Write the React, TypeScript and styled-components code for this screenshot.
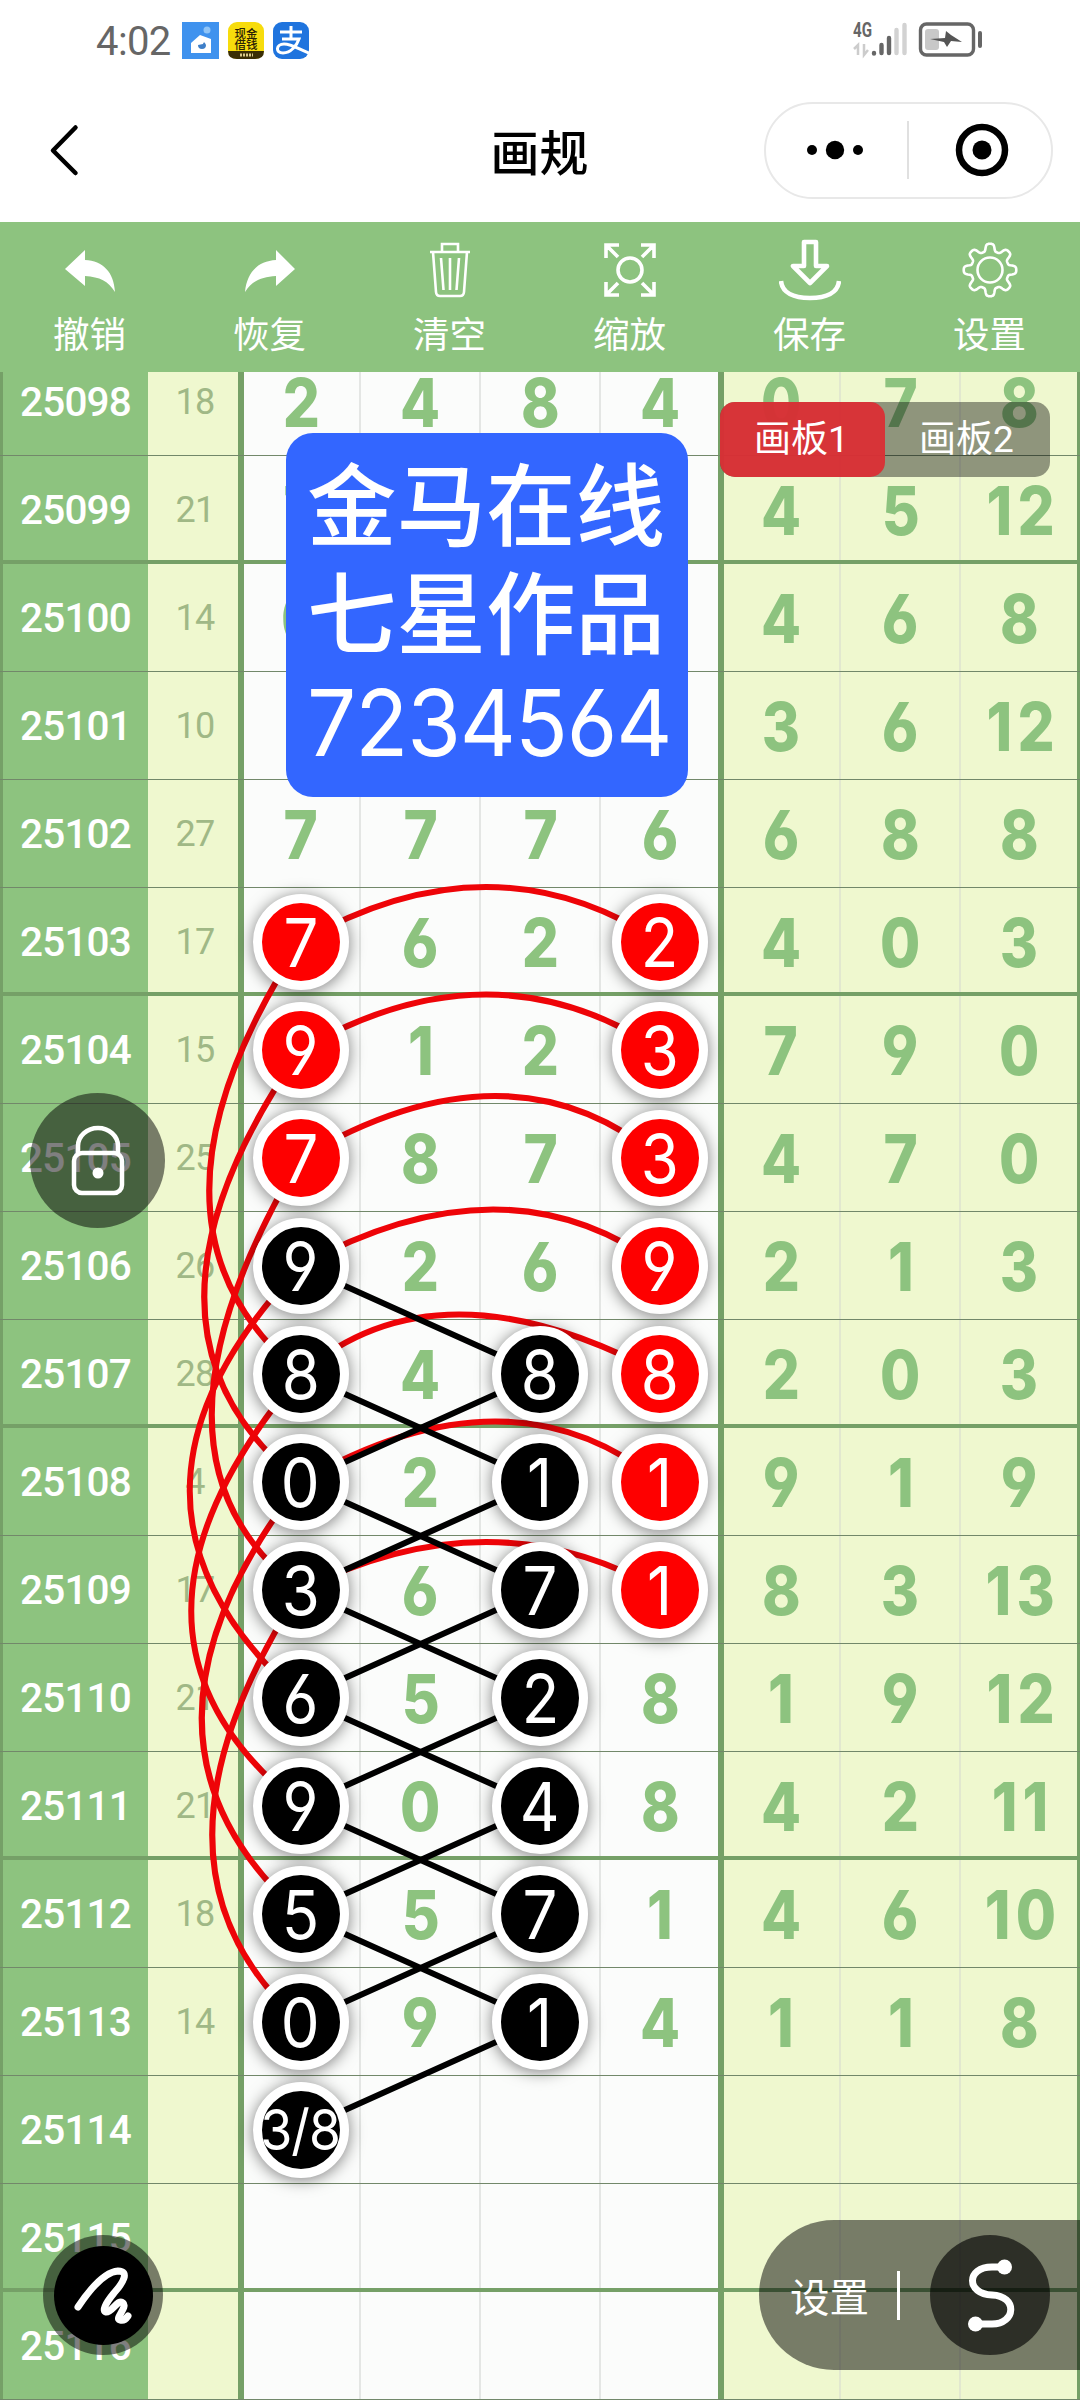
import React from "react";
import styled, { createGlobalStyle, css } from "styled-components";

const GREEN = "#8dc37f";
const LINE = "#75a067";
const PALE = "#eff8cf";
const latin = `Inter, Roboto, "Noto Sans CJK SC", sans-serif`;
const tabular = `Roboto, "Noto Sans CJK SC", sans-serif`;
const hans = `"Noto Sans CJK SC", sans-serif`;

const Global = createGlobalStyle`
  * { box-sizing: border-box; }
  body { margin: 0; background: #fff; font-family: ${latin}; font-feature-settings: "cv03", "cv04"; }
`;

const Screen = styled.div`
  position: relative;
  width: 1080px;
  height: 2400px;
  overflow: hidden;
  display: flex;
  flex-direction: column;
  background: #fff;
`;

/* ---------- status bar ---------- */
const StatusBar = styled.div`
  height: 80px;
  padding: 0 97px 0 96px;
  display: flex;
  align-items: center;
  justify-content: space-between;
`;
const StatusGroup = styled.div<{ $gap: number }>`
  display: flex;
  align-items: center;
  gap: ${(p) => p.$gap}px;
`;
const Clock = styled.span`
  width: 77px;
  font: 400 40px/44px Roboto, sans-serif;
  letter-spacing: -0.6px;
  color: #666;
  padding-top: 3px;
`;

/* ---------- navigation bar ---------- */
const NavBar = styled.div`
  height: 142px;
  padding: 0 27px 2px 48px;
  display: grid;
  grid-template-columns: 289px 1fr 289px;
  align-items: center;
`;
const Title = styled.h1`
  margin: 0 0 0 -22px;
  padding-bottom: 1px;
  font: 500 49px/56px ${hans};
  text-align: center;
  color: #000;
`;
const Capsule = styled.div`
  height: 97px;
  border: 2px solid #e8e8e8;
  border-radius: 49px;
  padding-right: 1px;
  display: grid;
  grid-template-columns: 1fr 2px 1fr;
  align-items: center;
  justify-items: center;
`;
const CapsuleRule = styled.i`
  width: 2px;
  height: 58px;
  background: #e0e0e0;
`;
const CapsuleIcon = styled.svg<{ $shift: number }>`
  margin-left: ${(p) => Math.max(p.$shift, 0)}px;
  margin-right: ${(p) => Math.max(-p.$shift, 0)}px;
`;

/* ---------- toolbar ---------- */
const Toolbar = styled.div`
  position: relative;
  z-index: 5;
  height: 150px;
  flex: none;
  display: grid;
  grid-template-columns: repeat(6, 1fr);
  background: ${GREEN};
`;
const Tool = styled.button`
  border: 0;
  padding: 16px 1px 0 0;
  background: none;
  display: flex;
  flex-direction: column;
  align-items: center;
  gap: 11px;
  color: #fff;
  font: 400 36.5px/40px ${hans};
`;

/* ---------- trend table ---------- */
const Viewport = styled.main`
  position: relative;
  flex: 1;
  overflow: hidden;
`;
const Sheet = styled.div`
  position: relative;
  margin-top: -24px;
`;
const Row = styled.div<{ $heavy: boolean }>`
  height: 108px;
  display: grid;
  grid-template-columns: 148px 90px 123px 120px 120px 117px 123px 120px 119px;
  border-bottom: ${(p) => (p.$heavy ? `4px solid ${LINE}` : "1px solid #72886a")};
`;
const Centered = css<{ $heavy: boolean }>`
  display: flex;
  align-items: center;
  justify-content: center;
  line-height: 1;
  padding-top: ${(p) => (p.$heavy ? 4 : 1)}px;
`;
const Issue = styled.div<{ $heavy: boolean }>`
  ${Centered}
  border-left: 3px solid ${LINE};
  background: ${GREEN};
  color: #fff;
  font-family: ${tabular};
  font-size: 40.5px;
  font-weight: 500;
  letter-spacing: -0.8px;
`;
const Sum = styled.div<{ $heavy: boolean }>`
  ${Centered}
  background: ${PALE};
  color: #a0b886;
  font-family: ${tabular};
  font-size: 36px;
  font-weight: 400;
  letter-spacing: -0.8px;
  padding-left: 4px;
`;
const Cell = styled.div<{ $heavy: boolean; $pale: boolean; $first: boolean; $last: boolean }>`
  ${Centered}
  background: ${(p) => (p.$pale ? PALE : "#fbfcfb")};
  border-left: ${(p) => (p.$first ? `6px solid ${LINE}` : "0")};
  border-right: ${(p) =>
    p.$last ? (p.$pale ? `3px solid ${LINE}` : "0") : `2px solid ${p.$pale ? "#e2e8cf" : "#e4e6e4"}`};
  ${(p) => p.$first && "padding-right: 2px;"}
`;
const Digit = styled.span<{ $wide: boolean }>`
  color: ${GREEN};
  font-size: 67px;
  font-weight: 800;
  letter-spacing: ${(p) => (p.$wide ? 6 : 0)}px;
  margin-left: ${(p) => (p.$wide ? 8 : 1)}px;
  transform: scaleX(0.87);
`;
const Ball = styled.span<{ $tone: string; $small: boolean }>`
  position: relative;
  z-index: 2;
  flex: none;
  width: 96px;
  height: 96px;
  border: 9px solid #fff;
  border-radius: 50%;
  background: ${(p) => p.$tone};
  box-shadow: 0 2px 16px rgba(0, 0, 0, 0.5);
  color: #fff;
  font-size: ${(p) => (p.$small ? 56 : 67)}px;
  font-weight: 400;
  letter-spacing: ${(p) => (p.$small ? -1 : 0)}px;
  display: flex;
  align-items: center;
  justify-content: center;
`;
const BallText = styled.span`
  transform: scaleX(0.92);
`;
const Strokes = styled.svg`
  position: absolute;
  z-index: 1;
  left: 0;
  top: 0;
  pointer-events: none;
`;

/* ---------- floating pieces ---------- */
const Note = styled.div`
  position: absolute;
  z-index: 3;
  left: 286px;
  top: 433px;
  width: 402px;
  height: 364px;
  padding: 20px 21px;
  border-radius: 27px;
  background: #3366ff;
  color: #fff;
  font-size: 89.5px;
  font-weight: 500;
  line-height: 108px;
  white-space: nowrap;
`;
const NoteNumber = styled.div`
  font-size: 92px;
  font-weight: 400;
  letter-spacing: -1.1px;
  transform: scaleX(0.945);
  transform-origin: left;
`;
const Boards = styled.div`
  position: absolute;
  z-index: 4;
  left: 720px;
  top: 402px;
  width: 330px;
  height: 75px;
  display: flex;
  border-radius: 15px;
  background: rgba(0, 0, 0, 0.4);
`;
const Board = styled.button<{ $on: boolean }>`
  flex: 1;
  border: 0;
  padding: 0 2px 0 0;
  border-radius: 15px;
  background: ${(p) => (p.$on ? "rgba(217, 49, 54, 0.97)" : "transparent")};
  color: #fff;
  font: 400 37px/75px ${tabular};
`;
const Round = styled.button<{ $x: number; $y: number; $size: number }>`
  position: absolute;
  z-index: 4;
  left: ${(p) => p.$x}px;
  top: ${(p) => p.$y}px;
  width: ${(p) => p.$size}px;
  height: ${(p) => p.$size}px;
  border: 0;
  padding: 0;
  border-radius: 50%;
  background: rgba(0, 0, 0, 0.5);
  display: flex;
  align-items: center;
  justify-content: center;
`;
const PenCore = styled.span`
  width: 99px;
  height: 99px;
  border-radius: 50%;
  background: #000;
`;
const Dock = styled.div`
  position: absolute;
  z-index: 4;
  right: 0;
  top: 2220px;
  width: 321px;
  height: 150px;
  padding: 0 30px 0 31px;
  border-radius: 75px 0 0 75px;
  background: rgba(0, 0, 0, 0.5);
  display: flex;
  align-items: center;
  color: #fff;
  font: 400 39.5px/48px ${hans};
`;
const DockRule = styled.i`
  width: 3px;
  height: 49px;
  margin: 0 auto 0 28px;
  background: #fff;
`;
const DockCore = styled.span`
  width: 120px;
  height: 120px;
  flex: none;
  border-radius: 50%;
  background: rgba(0, 0, 0, 0.62);
`;

/* ---------- data ---------- */
type Mark = "r" | "k";
type Line = { issue: string; sum: string; d: string[]; m?: Record<number, Mark>; e: string[] };
const LINES: Line[] = [
  { issue: "25098", sum: "18", d: ["2", "4", "8", "4"], e: ["0", "7", "8"] },
  { issue: "25099", sum: "21", d: ["7", "", "", ""], e: ["4", "5", "12"] },
  { issue: "25100", sum: "14", d: ["0", "", "", ""], e: ["4", "6", "8"] },
  { issue: "25101", sum: "10", d: ["", "", "", ""], e: ["3", "6", "12"] },
  { issue: "25102", sum: "27", d: ["7", "7", "7", "6"], e: ["6", "8", "8"] },
  { issue: "25103", sum: "17", d: ["7", "6", "2", "2"], m: { 0: "r", 3: "r" }, e: ["4", "0", "3"] },
  { issue: "25104", sum: "15", d: ["9", "1", "2", "3"], m: { 0: "r", 3: "r" }, e: ["7", "9", "0"] },
  { issue: "25105", sum: "25", d: ["7", "8", "7", "3"], m: { 0: "r", 3: "r" }, e: ["4", "7", "0"] },
  { issue: "25106", sum: "26", d: ["9", "2", "6", "9"], m: { 0: "k", 3: "r" }, e: ["2", "1", "3"] },
  { issue: "25107", sum: "28", d: ["8", "4", "8", "8"], m: { 0: "k", 2: "k", 3: "r" }, e: ["2", "0", "3"] },
  { issue: "25108", sum: "4", d: ["0", "2", "1", "1"], m: { 0: "k", 2: "k", 3: "r" }, e: ["9", "1", "9"] },
  { issue: "25109", sum: "17", d: ["3", "6", "7", "1"], m: { 0: "k", 2: "k", 3: "r" }, e: ["8", "3", "13"] },
  { issue: "25110", sum: "21", d: ["6", "5", "2", "8"], m: { 0: "k", 2: "k" }, e: ["1", "9", "12"] },
  { issue: "25111", sum: "21", d: ["9", "0", "4", "8"], m: { 0: "k", 2: "k" }, e: ["4", "2", "11"] },
  { issue: "25112", sum: "18", d: ["5", "5", "7", "1"], m: { 0: "k", 2: "k" }, e: ["4", "6", "10"] },
  { issue: "25113", sum: "14", d: ["0", "9", "1", "4"], m: { 0: "k", 2: "k" }, e: ["1", "1", "8"] },
  { issue: "25114", sum: "", d: ["3/8", "", "", ""], m: { 0: "k" }, e: ["", "", ""] },
  { issue: "25115", sum: "", d: ["", "", "", ""], e: ["", "", ""] },
  { issue: "25116", sum: "", d: ["", "", "", ""], e: ["", "", ""] },
];

const rowY = (n: number) => 54 + 108 * n;
// row index, control point x, control point rise
const BOWS: [number, number, number][] = [
  [5, 492, 110], [6, 492, 111], [7, 510, 124], [8, 506, 113], [9, 438, 119], [10, 510, 121], [11, 492, 96],
];
// row index, control point x, control point drop
const SWEEPS: [number, number, number][] = [
  [5, 118, 281], [6, 108, 278], [7, 123, 298], [8, 79, 234], [9, 82, 258], [10, 103, 256], [11, 124, 274],
];
const ZIG = [8, 9, 10, 11, 12, 13, 14];

const Drawing = () => (
  <Strokes width="1080" height="2052" viewBox="0 0 1080 2052" fill="none" strokeWidth="6">
    <g stroke="#ee0408">
      {BOWS.map(([n, cx, h]) => (
        <path key={n} d={`M300.5 ${rowY(n)}Q${cx} ${rowY(n) - h} 660 ${rowY(n)}`} />
      ))}
      {SWEEPS.map(([n, cx, h]) => (
        <path key={n} d={`M300.5 ${rowY(n)}Q${cx} ${rowY(n) + h} 300.5 ${rowY(n + 4)}`} />
      ))}
    </g>
    <g stroke="#000">
      {ZIG.map((n) => (
        <path key={n} d={`M300.5 ${rowY(n)}L540.5 ${rowY(n + 1)}L300.5 ${rowY(n + 2)}`} />
      ))}
    </g>
  </Strokes>
);

const gearPath = () => {
  const pts: string[] = [];
  for (let i = 0; i < 192; i++) {
    const a = (i / 192) * Math.PI * 2;
    const r = 22.6 + 3.8 * Math.tanh(2 * Math.cos(8 * a));
    pts.push(`${(30 + r * Math.cos(a)).toFixed(2)} ${(32 + r * Math.sin(a)).toFixed(2)}`);
  }
  return `M${pts.join("L")}Z`;
};

const TOOLS: { name: string; icon: React.ReactNode }[] = [
  {
    name: "撤销",
    icon: <path fill="#fff" d="M5 31 25 12V22C43 23 54 34 55 54C48 43 40 39 25 38V48Z" />,
  },
  {
    name: "恢复",
    icon: <path fill="#fff" d="M55 31 36 12V22C18 23 7 34 5 54C12 43 21 39 36 38V48Z" />,
  },
  {
    name: "清空",
    icon: (
      <g strokeWidth="2.6">
        <path d="M10 14H50M22 14V6H38V14M13 14L16 54Q16.300 58 20 58H40Q43.700 58 44 54L47 14M21 20L23.500 52M30 20V52M39 20L36.500 52" />
      </g>
    ),
  },
  {
    name: "缩放",
    icon: (
      <g strokeWidth="3.600">
        <circle cx="30" cy="32" r="12" />
        <path d="M6 20V7H19M7 8 18 19M41 7H54V20M53 8 42 19M6 44V57H19M7 56 18 45M41 57H54V44M53 56 42 45" />
      </g>
    ),
  },
  {
    name: "保存",
    icon: (
      <g strokeWidth="4.600" strokeLinejoin="round">
        <path d="M24 4H36V28H47L30 45 13 28H24Z" />
        <path d="M1 43C2 55 14 60 30 60S58 55 59 43" />
      </g>
    ),
  },
  {
    name: "设置",
    icon: (
      <g strokeWidth="2.6" strokeLinejoin="round">
        <circle cx="30" cy="32" r="12.500" />
        <path d={gearPath()} />
      </g>
    ),
  },
];

export default function App() {
  return (
    <Screen>
      <Global />
      <StatusBar>
        <StatusGroup $gap={9}>
          <Clock>4:02</Clock>
          <svg width="37" height="37" viewBox="0 0 37 37">
            <rect width="37" height="37" fill="#3f92ee" />
            <path d="M9 31V21L18 13 29 17V31Z" fill="#fff" />
            <path d="M16 23A4 4 0 0 0 24 23Q22 18 21 22Z" fill="#3f7fc8" />
            <circle cx="25" cy="8" r="3.500" fill="#8fc4f7" />
          </svg>
          <svg width="36" height="37" viewBox="0 0 36 37">
            <rect width="36" height="37" rx="9" fill="#f7dc0c" />
            <path d="M0 29H36Q36 37 27 37H9Q0 37 0 29Z" fill="#3a2e05" />
            <text x="18" y="15.500" fontSize="11.500" fontWeight="500" textAnchor="middle" fill="#2a2205">现金</text>
            <text x="18" y="27" fontSize="11.500" fontWeight="500" textAnchor="middle" fill="#2a2205">借钱</text>
            <path d="M12 33H25" stroke="#d9c98a" strokeWidth="3" strokeDasharray="2 1" />
          </svg>
          <svg width="36" height="37" viewBox="0 0 36 37" fill="none" stroke="#fff" strokeWidth="3">
            <rect width="36" height="37" rx="9" fill="#1f74de" stroke="none" />
            <path d="M7 10H29M18 4V17M9 17H26C24 23 18 31 10 31C2 31 3 22 11 22C18 22 26 27 36 31" />
          </svg>
        </StatusGroup>
        <StatusGroup $gap={0}>
          <svg width="130" height="44" viewBox="0 0 130 44">
            <text x="0" y="19" fontSize="20" fontWeight="700" fontFamily="Roboto, sans-serif" textLength="19" lengthAdjust="spacingAndGlyphs" fill="#666">4G</text>
            <path d="M5 37V27L1 31M11 26V37L15 32" stroke="#ccc" strokeWidth="2.500" fill="none" />
            <g strokeWidth="4.400" strokeLinecap="round">
              <path d="M21 35V35.500M28.500 27V35M36 20V35" stroke="#666" />
              <path d="M43.500 12V35M51.500 7V35" stroke="#d2d2d2" />
            </g>
            <rect x="67.500" y="6" width="53" height="31" rx="6" fill="none" stroke="#666" strokeWidth="3.400" />
            <rect x="72" y="11" width="14" height="21" rx="3" fill="#c8c8c8" />
            <path d="M77 21 91 24 94 29 98 23 109 24 98 17 93 13 92 20Z" fill="#555" />
            <rect x="125" y="13" width="4" height="17" rx="2" fill="#666" />
          </svg>
        </StatusGroup>
      </StatusBar>
      <NavBar>
        <svg width="34" height="56" viewBox="0 0 34 56" fill="none" stroke="#000" strokeWidth="4.500" strokeLinecap="round" strokeLinejoin="round">
          <path d="M27.500 5.500 5 28.500 27.500 51" />
        </svg>
        <Title>画规</Title>
        <Capsule>
          <CapsuleIcon $shift={-3} width="58" height="20" viewBox="0 0 58 20">
            <circle cx="6" cy="10" r="5" />
            <circle cx="29" cy="10" r="9.200" />
            <circle cx="52" cy="10" r="5" />
          </CapsuleIcon>
          <CapsuleRule />
          <CapsuleIcon $shift={5} width="54" height="54" viewBox="0 0 54 54">
            <circle cx="27" cy="27" r="23" fill="none" stroke="#000" strokeWidth="6.500" />
            <circle cx="27" cy="27" r="9.500" />
          </CapsuleIcon>
        </Capsule>
      </NavBar>
      <Toolbar>
        {TOOLS.map((t) => (
          <Tool key={t.name}>
            <svg width="62" height="64" viewBox="-1 0 62 64" fill="none" stroke="#fff" strokeWidth="0">
              {t.icon}
            </svg>
            {t.name}
          </Tool>
        ))}
      </Toolbar>
      <Viewport>
        <Sheet>
          {LINES.map((l, n) => {
            const heavy = n % 4 === 1;
            return (
              <Row key={l.issue} $heavy={heavy}>
                <Issue $heavy={heavy}>{l.issue}</Issue>
                <Sum $heavy={heavy}>{l.sum}</Sum>
                {l.d.map((v, i) => (
                  <Cell key={i} $heavy={heavy} $pale={false} $first={i === 0} $last={i === 3}>
                    {l.m?.[i] ? (
                      <Ball $tone={l.m[i] === "r" ? "#fe0000" : "#000"} $small={v.length > 1}>
                        <BallText>{v}</BallText>
                      </Ball>
                    ) : (
                      v && <Digit $wide={false}>{v}</Digit>
                    )}
                  </Cell>
                ))}
                {l.e.map((v, i) => (
                  <Cell key={`e${i}`} $heavy={heavy} $pale $first={i === 0} $last={i === 2}>
                    {v && <Digit $wide={v.length > 1}>{v}</Digit>}
                  </Cell>
                ))}
              </Row>
            );
          })}
          <Drawing />
        </Sheet>
      </Viewport>
      <Note>
        <div>金马在线</div>
        <div>七星作品</div>
        <NoteNumber>7234564</NoteNumber>
      </Note>
      <Boards>
        <Board $on>画板1</Board>
        <Board $on={false}>画板2</Board>
      </Boards>
      <Round $x={30} $y={1093} $size={135}>
        <svg width="60" height="76" viewBox="0 0 60 76" fill="none" stroke="#fff" strokeWidth="4.500">
          <rect x="6" y="30" width="48" height="40" rx="8" />
          <path d="M10 30V23A20 18 0 0 1 50 23V30" />
          <circle cx="30" cy="50" r="5.500" fill="#fff" stroke="none" />
        </svg>
      </Round>
      <Round $x={43} $y={2235} $size={120}>
        <PenCore>
          <svg width="99" height="99" viewBox="0 0 99 99" fill="none" stroke="#fff" strokeWidth="7" strokeLinecap="round" strokeLinejoin="round">
            <path d="M24 61C36 43 51 26 64 25C76 25 69 37 60 47C51 58 48 65 52 66C58 67 64 52 69 57C74 61 60 73 66 74C69 75 72 73 74 70" />
          </svg>
        </PenCore>
      </Round>
      <Dock>
        设置
        <DockRule />
        <DockCore>
          <svg width="120" height="120" viewBox="0 0 120 120" fill="none" stroke="#fff" strokeWidth="7">
            <path d="M74 32H62C36 32 36 59 62 60C88 61 86 89 62 89H46" />
            <circle cx="74.500" cy="32" r="7.500" fill="#fff" stroke="none" />
            <circle cx="45.500" cy="89" r="7.500" fill="#fff" stroke="none" />
          </svg>
        </DockCore>
      </Dock>
    </Screen>
  );
}
